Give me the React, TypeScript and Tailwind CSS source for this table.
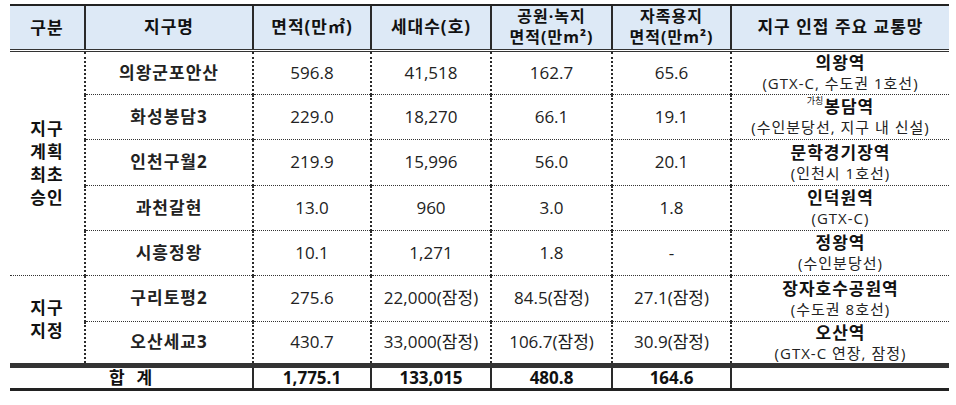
const rows = [
  { name: '의왕군포안산', area: '596.8', homes: '41,518', park: '162.7', self: '65.6', st: '의왕역', sub: '(GTX-C, 수도권 1호선)', h: 'h-[44px]' },
  { name: '화성봉담3', area: '229.0', homes: '18,270', park: '66.1', self: '19.1', st: '봉담역', pre: '가칭', sub: '(수인분당선, 지구 내 신설)', h: 'h-[45px]' },
  { name: '인천구월2', area: '219.9', homes: '15,996', park: '56.0', self: '20.1', st: '문학경기장역', sub: '(인천시 1호선)', h: 'h-[46px]' },
  { name: '과천갈현', area: '13.0', homes: '960', park: '3.0', self: '1.8', st: '인덕원역', sub: '(GTX-C)', h: 'h-[45px]' },
  { name: '시흥정왕', area: '10.1', homes: '1,271', park: '1.8', self: '-', st: '정왕역', sub: '(수인분당선)', h: 'h-[45px]' },
  { name: '구리토평2', area: '275.6', homes: '22,000(잠정)', park: '84.5(잠정)', self: '27.1(잠정)', st: '장자호수공원역', sub: '(수도권 8호선)', h: 'h-[46px]' },
  { name: '오산세교3', area: '430.7', homes: '33,000(잠정)', park: '106.7(잠정)', self: '30.9(잠정)', st: '오산역', sub: '(GTX-C 연장, 잠정)', h: 'h-[43px]' },
];

const th = 'border-l-2 border-[#2a2a2a] px-1 text-center align-middle font-bold text-[17px] leading-[20px] tracking-[1px] text-[#111]';
const th2 = 'border-l-2 border-[#2a2a2a] px-0 text-center align-middle font-bold text-[16px] leading-[21px] tracking-[1px] text-[#111]';
const td = 'border-l-2 border-[#2a2a2a] border-b border-b-[#333] border-dotted text-center align-middle text-[17px] text-[#222]';

function Group({ lines, span }: { lines: string[]; span: number }) {
  return (
    <td rowSpan={span} className="border-b border-dotted border-[#333] text-center align-middle font-bold text-[17px] leading-[23px] tracking-[1px] text-[#111]">
      {lines.map((l) => (
        <div key={l}>{l}</div>
      ))}
    </td>
  );
}

export default function App() {
  return (
    <div className="w-[956px] h-[405px] bg-white pt-1 pl-[10px] font-['Open_Sans','Noto_Sans_CJK_KR',sans-serif]">
      <table className="w-[939px] table-fixed border-collapse">
        <colgroup>
          <col className="w-[75px]" />
          <col className="w-[168px]" />
          <col className="w-[118px]" />
          <col className="w-[120px]" />
          <col className="w-[121px]" />
          <col className="w-[119px]" />
          <col className="w-[218px]" />
        </colgroup>
        <thead>
          <tr className="h-[45px] bg-[#dde9f6] border-t-2 border-t-[#222] border-b-[3px] border-b-[#333] border-double">
            <th className="px-1 text-center align-middle font-bold text-[17px] tracking-[1px] text-[#111]">구분</th>
            <th className={th}>지구명</th>
            <th className={th}>면적(만㎡)</th>
            <th className={th}>세대수(호)</th>
            <th className={th2}>
              <div>공원·녹지</div>
              <div>면적(만m²)</div>
            </th>
            <th className={th2}>
              <div>자족용지</div>
              <div>면적(만m²)</div>
            </th>
            <th className={th}>지구 인접 주요 교통망</th>
          </tr>
        </thead>
        <tbody>
          {rows.map((r, i) => (
            <tr key={r.name} className={r.h}>
              {i === 0 && <Group lines={['지구', '계획', '최초', '승인']} span={5} />}
              {i === 5 && <Group lines={['지구', '지정']} span={2} />}
              <td className={td + ' font-bold tracking-[1px] text-[#111]'}>{r.name}</td>
              <td className={td}>{r.area}</td>
              <td className={td}>{r.homes}</td>
              <td className={td}>{r.park}</td>
              <td className={td}>{r.self}</td>
              <td className={td}>
                <div className="font-bold leading-[21px] tracking-[1px] text-[#111]">
                  {r.pre && (
                    <span className="inline-block align-top text-[9px] leading-[10px] font-normal tracking-normal mr-px">{r.pre}</span>
                  )}
                  {r.st}
                </div>
                <div className="text-[15px] leading-[20px] tracking-[1px]">{r.sub}</div>
              </td>
            </tr>
          ))}
          <tr className="h-[24px] border-t-[5px] border-double border-t-[#333] border-b-[3px] border-b-[#222] border-solid font-bold text-[17px] text-[#111]">
            <td colSpan={2} className="text-center align-middle leading-[18px] tracking-[1px]">
              합&nbsp;&nbsp;계
            </td>
            <td className="border-l-2 border-[#2a2a2a] text-center align-middle leading-[18px]">1,775.1</td>
            <td className="border-l-2 border-[#2a2a2a] text-center align-middle leading-[18px]">133,015</td>
            <td className="border-l-2 border-[#2a2a2a] text-center align-middle leading-[18px]">480.8</td>
            <td className="border-l-2 border-[#2a2a2a] text-center align-middle leading-[18px]">164.6</td>
            <td className="border-l-2 border-[#2a2a2a]"></td>
          </tr>
        </tbody>
      </table>
    </div>
  );
}
